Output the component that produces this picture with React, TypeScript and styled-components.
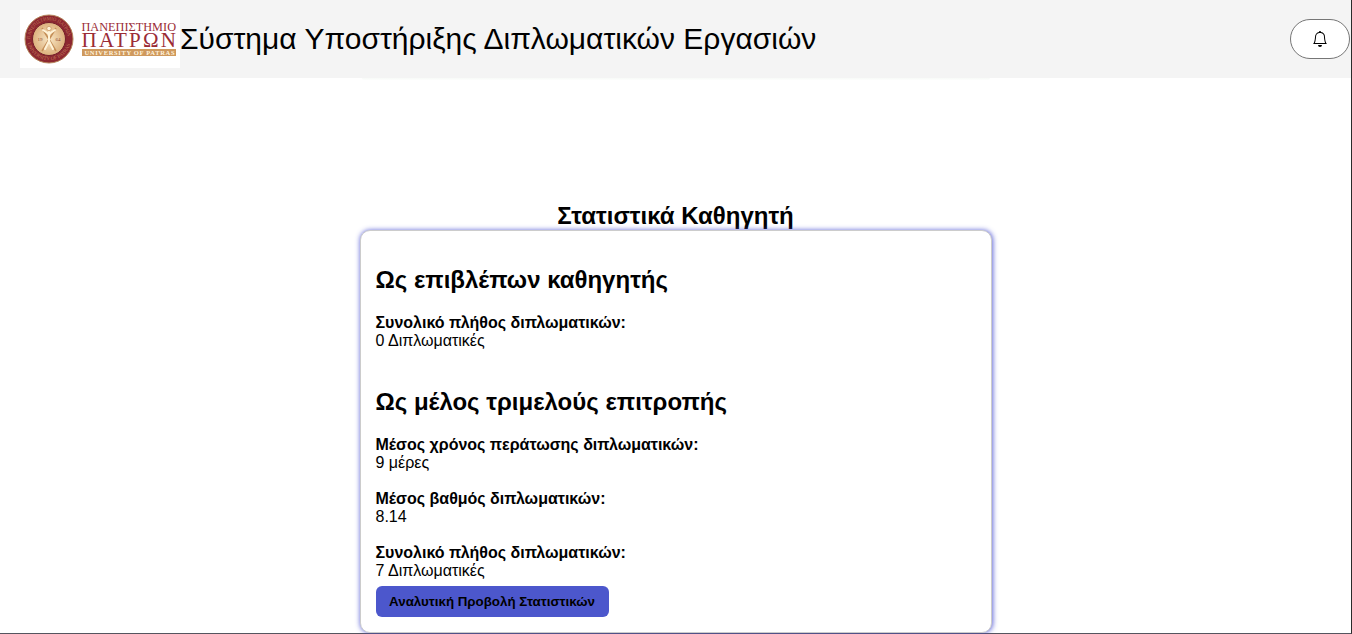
import React from "react";
import styled, { createGlobalStyle } from "styled-components";
import { BsBell } from "react-icons/bs";

const GlobalStyle = createGlobalStyle`
  * { box-sizing: border-box; }
  body {
    margin: 0;
    background: #fff;
    color: #000;
    font: 16px/18px "Liberation Sans", Arial, sans-serif;
    overflow: hidden;
  }
`;

const Page = styled.div`
  height: 634px;
  display: flex;
  flex-direction: column;
  align-items: center;
  border-right: 1px solid #2b2b2b;
  border-bottom: 1px solid #55555f;
`;

const Header = styled.header`
  width: 100%;
  height: 78px;
  flex: none;
  display: flex;
  align-items: center;
  padding: 0 1px 0 20px;
  background: #f4f4f4;
`;

const Logo = styled.svg`
  display: block;
  width: 160px;
  height: 58px;
`;

const Title = styled.div`
  flex: 1;
  font-size: 30px;
  line-height: 34px;
  white-space: nowrap;
`;

const BellButton = styled.button`
  display: flex;
  align-items: center;
  justify-content: center;
  width: 60px;
  height: 40px;
  padding: 0;
  border: 1px solid #767676;
  border-radius: 20px;
  background: #fff;
  color: #000;
`;

const HeaderGlow = styled.div`
  width: 628px;
  height: 2px;
  flex: none;
  background: linear-gradient(#f7faf7, #fdfefd);
  border-radius: 0 0 10px 10px;
`;

const Heading = styled.h2`
  margin: 122px 0 0;
  font-size: 24px;
  line-height: 28px;
`;

const Card = styled.section`
  width: 632px;
  height: 403px;
  flex: none;
  padding: 15px;
  border: 1px solid #ccc;
  border-radius: 10px;
  box-shadow: 0.5px 0 5px rgba(70, 78, 210, 0.85);
  background: #fff;
`;

const SectionTitle = styled.h2<{ $top: number }>`
  margin: ${(p) => p.$top}px 0 21px;
  font-size: 24px;
  line-height: 27px;
`;

const Stat = styled.div`
  & + & {
    margin-top: 18px;
  }
`;

const Label = styled.strong`
  display: block;
`;

const StatsButton = styled.button`
  display: block;
  width: 233px;
  height: 31px;
  margin-top: 6px;
  padding: 0;
  border: 0;
  border-radius: 6px;
  background: #4c57cc;
  color: #000;
  font: bold 13.333px "Liberation Sans", Arial, sans-serif;
`;

const UniversityLogo = () => (
  <Logo viewBox="0 0 160 58">
    <defs>
      <path id="sealTop" d="M10.3 31a18.8 18.8 0 1 1 37.4 0" />
      <path id="sealBottom" d="M7 31a22.2 22.2 0 0 0 44 0" />
      <radialGradient id="sealGold">
        <stop offset="0" stopColor="#f8e6c4" />
        <stop offset="1" stopColor="#dcb07c" />
      </radialGradient>
    </defs>
    <rect width="160" height="58" fill="#fff" />
    <circle cx="29" cy="29" r="24" fill="#8c2730" stroke="#b5855a" strokeWidth="1" />
    <circle cx="29" cy="29" r="16.5" fill="url(#sealGold)" stroke="#74202a" strokeWidth="1" />
    <g fill="#c07a58" fontFamily="Liberation Serif, serif" fontSize="5">
      <text textLength="56" lengthAdjust="spacingAndGlyphs">
        <textPath href="#sealTop" startOffset="2">ΠΑΝΕΠΙΣΤΗΜΙΟ ΠΑΤΡΩΝ</textPath>
      </text>
      <text textLength="58" lengthAdjust="spacingAndGlyphs">
        <textPath href="#sealBottom" startOffset="2">UNIVERSITY OF PATRAS</textPath>
      </text>
    </g>
    <path d="M22 18l14 23M36 18L22 41" fill="none" stroke="#c58f58" strokeWidth="1.6" />
    <path
      d="M29 22v10M29 24l-6-4M29 24l6-4M29 31l-4 8M29 31l4 8"
      fill="none"
      stroke="#fff3d8"
      strokeWidth="2"
      strokeLinecap="round"
    />
    <circle cx="29" cy="18.5" r="2.2" fill="#fff3d8" stroke="#bd8248" strokeWidth=".6" />
    <g fill="#8d4b35" fontFamily="Liberation Serif, serif" fontSize="5">
      <text x="17.5" y="31">19</text>
      <text x="35.5" y="31">64</text>
    </g>
    <g fill="#9b2c36" fontFamily="Liberation Serif, serif">
      <text x="61.5" y="21" fontSize="13.5" textLength="94.5" lengthAdjust="spacingAndGlyphs">ΠΑΝΕΠΙΣΤΗΜΙΟ</text>
      <text x="61.5" y="36.5" fontSize="21" textLength="94.5" lengthAdjust="spacing">ΠΑΤΡΩΝ</text>
    </g>
    <rect x="62" y="39" width="94" height="7" fill="#cf995d" />
    <text x="64.5" y="44.8" fill="#fff4df" fontFamily="Liberation Serif, serif" fontWeight="bold" fontSize="6.5" textLength="90" lengthAdjust="spacing">UNIVERSITY OF PATRAS</text>
  </Logo>
);

const committeeStats = [
  { label: "Μέσος χρόνος περάτωσης διπλωματικών:", value: "9 μέρες" },
  { label: "Μέσος βαθμός διπλωματικών:", value: "8.14" },
  { label: "Συνολικό πλήθος διπλωματικών:", value: "7 Διπλωματικές" },
];

export default function App() {
  return (
    <>
      <GlobalStyle />
      <Page>
        <Header>
          <UniversityLogo />
          <Title>Σύστημα Υποστήριξης Διπλωματικών Εργασιών</Title>
          <BellButton>
            <BsBell size={16} />
          </BellButton>
        </Header>
        <HeaderGlow />
        <Heading>Στατιστικά Καθηγητή</Heading>
        <Card>
          <SectionTitle $top={20}>Ως επιβλέπων καθηγητής</SectionTitle>
          <Stat>
            <Label>Συνολικό πλήθος διπλωματικών:</Label>
            0 Διπλωματικές
          </Stat>
          <SectionTitle $top={38}>Ως μέλος τριμελούς επιτροπής</SectionTitle>
          {committeeStats.map((s) => (
            <Stat key={s.label}>
              <Label>{s.label}</Label>
              {s.value}
            </Stat>
          ))}
          <StatsButton>Αναλυτική Προβολή Στατιστικών</StatsButton>
        </Card>
      </Page>
    </>
  );
}
